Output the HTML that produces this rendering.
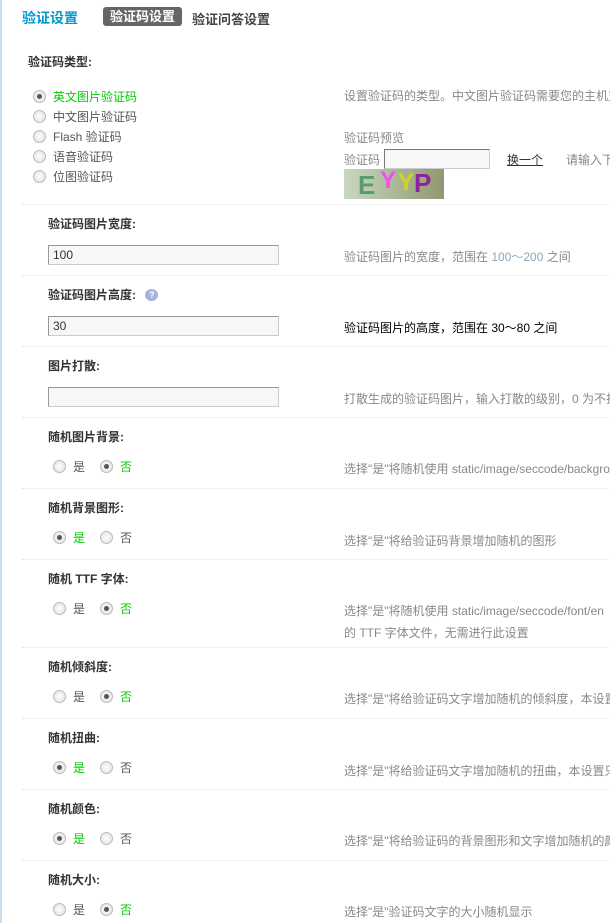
<!DOCTYPE html>
<html><head><meta charset="utf-8"><style>
body{margin:0;width:610px;height:923px;overflow:hidden;background:#fff;font-family:"Liberation Sans","Noto Sans CJK SC",sans-serif;font-size:12px;color:#555;position:relative}
.a{position:absolute;white-space:nowrap}
.lb{font-weight:bold;color:#333}
.sep{position:absolute;left:22px;right:0;border-top:1px dotted #d6e9f5;height:0}
.in{position:absolute;left:48px;border:1px solid #999;border-right-color:#ccc;border-bottom-color:#ccc;background:#f7f7f7;font-size:12px;line-height:18px;padding-left:4px;box-sizing:border-box;height:20px;width:231px;color:#333}
.r{position:absolute;width:11px;height:11px;border-radius:50%;border:1px solid #bbb;background:radial-gradient(#fff,#ddd)}
.r.on::after{content:"";position:absolute;left:3px;top:3px;width:5px;height:5px;border-radius:50%;background:#555}
.d{color:#888}
.g{color:#0c0}
</style></head><body>
<div style="position:absolute;left:0;top:0;width:2px;height:923px;background:#c8dcec"></div>
<div class="a" style="left:22px;top:8px;font-size:14px;font-weight:bold;color:#09c">验证设置</div>
<div class="a" style="left:103px;top:7px;width:79px;height:19px;background:#666;border-radius:3px;color:#fff;font-weight:bold;font-size:13px;line-height:20px;text-align:center">验证码设置</div>
<div class="a lb" style="left:192px;top:9px;font-size:13px;color:#444">验证问答设置</div>
<div class="a lb" style="left:28px;top:53px">验证码类型:</div>
<div class="r on" style="left:33px;top:90px"></div><div class="a g" style="left:53px;top:88px">英文图片验证码</div>
<div class="r" style="left:33px;top:110px"></div><div class="a" style="left:53px;top:108px">中文图片验证码</div>
<div class="r" style="left:33px;top:130px"></div><div class="a" style="left:53px;top:128px">Flash 验证码</div>
<div class="r" style="left:33px;top:150px"></div><div class="a" style="left:53px;top:148px">语音验证码</div>
<div class="r" style="left:33px;top:170px"></div><div class="a" style="left:53px;top:168px">位图验证码</div>
<div class="a d" style="left:344px;top:87px">设置验证码的类型。中文图片验证码需要您的主机支持</div>
<div class="a d" style="left:344px;top:129px">验证码预览</div>
<div class="a d" style="left:344px;top:151px">验证码</div>
<div class="a" style="left:384px;top:149px;width:104px;height:18px;border:1px solid #777;border-right-color:#ccc;border-bottom-color:#ccc;background:#f8f8f8"></div>
<div class="a" style="left:507px;top:151px;color:#333;text-decoration:underline">换一个</div>
<div class="a d" style="left:566px;top:151px">请输入下面</div>
<div class="a" style="left:344px;top:169px;width:100px;height:30px;background:linear-gradient(90deg,#c8d8c0,#909870);overflow:hidden">
<span style="position:absolute;left:14px;top:1px;font:bold 26px 'Liberation Sans';color:#5a9a70">E</span>
<span style="position:absolute;left:36px;top:-2px;font:bold 24px 'Liberation Sans';color:#f050f0">Y</span>
<span style="position:absolute;left:54px;top:0px;font:bold 24px 'Liberation Sans';color:#d8d020">Y</span>
<span style="position:absolute;left:70px;top:-1px;font:bold 26px 'Liberation Sans';color:#9020a0">P</span>
</div>
<div class="sep" style="top:204px"></div>
<div class="a lb" style="left:48px;top:215px">验证码图片宽度:</div>
<div class="in" style="top:245px">100</div>
<div class="a d" style="left:344px;top:248px">验证码图片的宽度，范围在 <span style="color:#8ab">100～200</span> 之间</div>
<div class="sep" style="top:275px"></div>
<div class="a lb" style="left:48px;top:286px">验证码图片高度: <span style="display:inline-block;width:13px;height:12px;border-radius:50%;background:#a8b0e0;color:#fff;font-size:9px;text-align:center;line-height:12px;vertical-align:1px;margin-left:6px">?</span></div>
<div class="in" style="top:316px">30</div>
<div class="a" style="left:344px;top:319px;color:#000">验证码图片的高度，范围在 30～80 之间</div>
<div class="sep" style="top:346px"></div>
<div class="a lb" style="left:48px;top:357px">图片打散:</div>
<div class="in" style="top:387px"></div>
<div class="a d" style="left:344px;top:390px">打散生成的验证码图片，输入打散的级别，0 为不打散</div>
<div class="sep" style="top:417px"></div>
<div class="a lb" style="left:48px;top:428px">随机图片背景:</div>
<div class="r" style="left:53px;top:460px"></div><div class="a" style="left:73px;top:458px">是</div>
<div class="r on" style="left:100px;top:460px"></div><div class="a g" style="left:120px;top:458px">否</div>
<div class="a d" style="left:344px;top:460px">选择"是"将随机使用 static/image/seccode/backgrou</div>
<div class="sep" style="top:488px"></div>
<div class="a lb" style="left:48px;top:499px">随机背景图形:</div>
<div class="r on" style="left:53px;top:531px"></div><div class="a g" style="left:73px;top:529px">是</div>
<div class="r" style="left:100px;top:531px"></div><div class="a" style="left:120px;top:529px">否</div>
<div class="a d" style="left:344px;top:532px">选择"是"将给验证码背景增加随机的图形</div>
<div class="sep" style="top:559px"></div>
<div class="a lb" style="left:48px;top:570px">随机 TTF 字体:</div>
<div class="r" style="left:53px;top:602px"></div><div class="a" style="left:73px;top:600px">是</div>
<div class="r on" style="left:100px;top:602px"></div><div class="a g" style="left:120px;top:600px">否</div>
<div class="a d" style="left:344px;top:602px">选择"是"将随机使用 static/image/seccode/font/en</div>
<div class="a d" style="left:344px;top:624px">的 TTF 字体文件，无需进行此设置</div>
<div class="sep" style="top:647px"></div>
<div class="a lb" style="left:48px;top:658px">随机倾斜度:</div>
<div class="r" style="left:53px;top:690px"></div><div class="a" style="left:73px;top:688px">是</div>
<div class="r on" style="left:100px;top:690px"></div><div class="a g" style="left:120px;top:688px">否</div>
<div class="a d" style="left:344px;top:690px">选择"是"将给验证码文字增加随机的倾斜度，本设置只</div>
<div class="sep" style="top:718px"></div>
<div class="a lb" style="left:48px;top:729px">随机扭曲:</div>
<div class="r on" style="left:53px;top:761px"></div><div class="a g" style="left:73px;top:759px">是</div>
<div class="r" style="left:100px;top:761px"></div><div class="a" style="left:120px;top:759px">否</div>
<div class="a d" style="left:344px;top:762px">选择"是"将给验证码文字增加随机的扭曲，本设置只针</div>
<div class="sep" style="top:789px"></div>
<div class="a lb" style="left:48px;top:800px">随机颜色:</div>
<div class="r on" style="left:53px;top:832px"></div><div class="a g" style="left:73px;top:830px">是</div>
<div class="r" style="left:100px;top:832px"></div><div class="a" style="left:120px;top:830px">否</div>
<div class="a d" style="left:344px;top:832px">选择"是"将给验证码的背景图形和文字增加随机的颜色</div>
<div class="sep" style="top:860px"></div>
<div class="a lb" style="left:48px;top:871px">随机大小:</div>
<div class="r" style="left:53px;top:903px"></div><div class="a" style="left:73px;top:901px">是</div>
<div class="r on" style="left:100px;top:903px"></div><div class="a g" style="left:120px;top:901px">否</div>
<div class="a d" style="left:344px;top:903px">选择"是"验证码文字的大小随机显示</div>
</body></html>
